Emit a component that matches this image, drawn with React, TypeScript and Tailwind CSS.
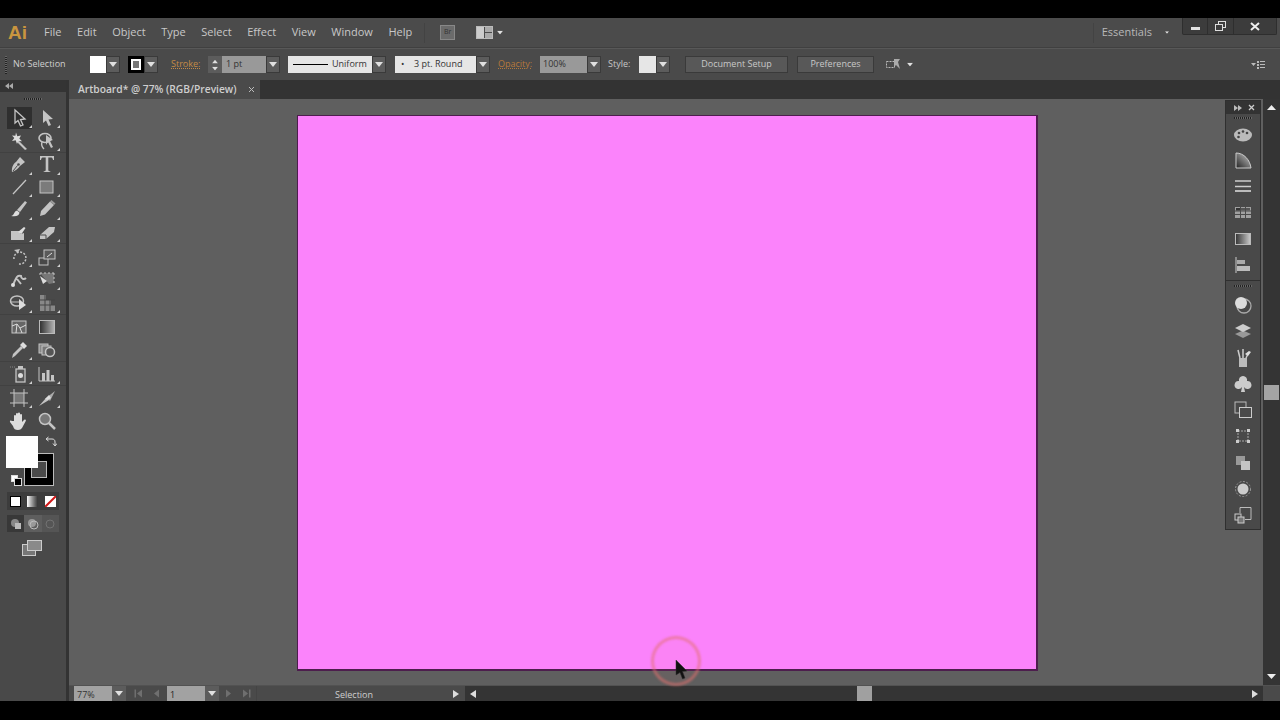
import type { ReactNode } from "react"

const FONT = "font-['Open_Sans','Liberation_Sans',sans-serif]"

// small down triangle used by every dropdown
function Tri({ className = "" }: { className?: string }) {
  return (
    <svg width="8" height="5" viewBox="0 0 8 5" className={className}>
      <path d="M0 0h8L4 5z" fill="#e0e0e0" />
    </svg>
  )
}

function DropBtn() {
  return (
    <div className="w-[14px] h-[17px] bg-[#5c5c5c] border border-[#3a3a3a] flex items-center justify-center">
      <Tri />
    </div>
  )
}

function Icon({ children, w = 20, h = 20 }: { children: ReactNode; w?: number; h?: number }) {
  return (
    <svg width={w} height={h} viewBox={`0 0 ${w} ${h}`} fill="none">
      {children}
    </svg>
  )
}

const c = "#c4c4c4"
const toolRows: ReactNode[][][] = [
  [
    [
      <path d="M6 2l10 9-4.5.5L14 17l-2.500 1-2.500-5.500L6 15z" stroke={c} strokeWidth="1.300" />,
      <path d="M6 2l10 9-4.500.5L14 17l-2.500 1-2.500-5.500L6 15z" fill={c} />,
    ],
    [
      <g><path d="M9 9l9 9-2 1-8-8z" fill={c} /><path d="M7 1.500l1.300 3.700 3.700-.7-1.700 3 2.700 2.700-3.800-.2L8 13l-1.300-3.700L3 10l2.300-3L3 4.500l3.400.3z" fill="#ddd" /></g>,
      <g><ellipse cx="8" cy="7" rx="6" ry="4.500" stroke={c} strokeWidth="1.600" /><path d="M9 4l7 5-3 1 3 6-2 1-3-6-2 3z" fill={c} /><path d="M5 11c-1 3 1 6 2 7" stroke={c} strokeWidth="1.400" /></g>,
    ],
  ],
  [
    [
      <g><path d="M3 18c-.5-4 1-8 4-10l4-5 5 5-5 4c-2 3-5 5-8 6z" fill={c} /><circle cx="9.500" cy="10.500" r="1.300" fill="#4a4a4a" /><path d="M4 17l4.500-5.500" stroke="#4a4a4a" /></g>,
      <path d="M3 2h14v4h-1c-.3-2-1-2.500-2.500-2.500H11.300v12.500c0 1 .7 1.200 2 1.300v.7H6.700v-.7c1.300-.1 2-.3 2-1.300V3.500H6.500C5 3.500 4.300 4 4 6H3z" fill={c} />,
    ],
    [
      <path d="M4 17L17 3" stroke={c} strokeWidth="1.300" />,
      <rect x="3" y="4" width="13" height="12" fill="#7b7b7b" stroke={c} />,
    ],
    [
      <g><path d="M8 11l8-9 2 1.500-7 9.500z" fill={c} /><path d="M2 17c3 0 3-5 6-5.500l2.500 2c0 3-3 4.500-8.500 3.500z" fill="#ddd" /></g>,
      <g><path d="M3 17l1-5 9-9.500 4 3.500-9 9.500z" fill={c} /><path d="M13 2.500l4 3.500 1.500-1.500-4-3.500z" fill="#999" /></g>,
    ],
    [
      <g><path d="M2 9h8l2 3 3-1v7H2z" fill={c} /><path d="M9 10l6-5 1.500 1-4 6z" fill="#ddd" /></g>,
      <g><path d="M3 13l9-8h6l-1 5-8 7H3z" fill={c} /><path d="M3 13h6v4" stroke="#4a4a4a" /></g>,
    ],
  ],
  [
    [
      <g><path d="M5 12a6 6 0 1 1 5 5" stroke={c} strokeWidth="1.500" strokeDasharray="2 1.500" /><path d="M5 3l6-1-2 4z" fill={c} /></g>,
      <g><rect x="2" y="11" width="9" height="7" stroke={c} /><rect x="7" y="3" width="11" height="9" stroke={c} fill="#5a5a5a" /><path d="M10 10l5-4" stroke="#ddd" /></g>,
    ],
    [
      <g><path d="M4 15c3-6 3-10 8-9 0 3 3 4 5 2M8 9l4 5" stroke={c} strokeWidth="2" /><circle cx="4" cy="15" r="2" fill="#ddd" /></g>,
      <g><path d="M3 3h14v10l-5 1z" fill="#777" /><path d="M3 3h14M17 3v12M3 3v3" stroke={c} strokeDasharray="2 2" /><path d="M3 6l7 5-4 3z" fill="#ddd" /></g>,
    ],
    [
      <g><ellipse cx="8" cy="8" rx="6.500" ry="5" stroke={c} strokeWidth="1.500" /><path d="M1.500 9h9" stroke={c} /><path d="M10 6l7 6-7 5z" fill="#ddd" /></g>,
      <g><path d="M3 2h6v5h5v5h4v6H3z" fill="#888" /><path d="M3 7h15M3 12h15M8 2v16M13 7v11" stroke="#444" /></g>,
    ],
  ],
  [
    [
      <g><rect x="3" y="4" width="14" height="12" fill="#666" stroke={c} /><path d="M3 9l5-2 3 4 6-3M8 7l-1 9M11 11l2 5" stroke="#ddd" /></g>,
      <g><defs><linearGradient id="gradTool"><stop offset="0" stopColor="#2e2e2e" /><stop offset="1" stopColor="#b5b5b5" /></linearGradient></defs><rect x="2.500" y="3.500" width="15" height="13" fill="url(#gradTool)" stroke="#bbb" /></g>,
    ],
    [
      <g><path d="M3 18l1-4 8-8 2 2-8 8z" fill={c} /><path d="M11 5l3-3 4 4-3 3z" fill="#ddd" /></g>,
      <g><rect x="2" y="4" width="9" height="9" fill="#888" stroke={c} /><rect x="5" y="6" width="9" height="9" fill="#777" stroke={c} /><circle cx="13" cy="12" r="4.500" fill="#555" stroke={c} strokeWidth="1.500" /></g>,
    ],
  ],
  [
    [
      <g><path d="M1 3h1M3 3h1M5 3h1" stroke="#888" /><rect x="7" y="5" width="9" height="13" stroke={c} strokeWidth="1.300" fill="#555" /><rect x="9" y="2" width="5" height="3" fill={c} /><circle cx="11.500" cy="11.500" r="2.500" fill="#ddd" /></g>,
      <g><path d="M2 3v14h16" stroke={c} /><rect x="5" y="9" width="3" height="8" fill={c} /><rect x="9.500" y="6" width="3" height="11" fill={c} /><rect x="14" y="11" width="3" height="6" fill={c} /></g>,
    ],
  ],
  [
    [
      <g><rect x="5" y="5" width="10" height="10" fill="#777" /><path d="M5 1v4M15 1v4M5 15v4M15 15v4M1 5h4M1 15h4M15 5h4M15 15h4M5 5h10v10H5z" stroke={c} /></g>,
      <g><path d="M2 18L9 10l3 2z" fill={c} /><path d="M9 10l9-7-5 10-1-1z" fill="#aaa" /><path d="M8 11l4-4 2 3-3 2z" fill="#ddd" /></g>,
    ],
    [
      <path d="M5 10V5a1 1 0 0 1 2 0v3-5a1 1 0 0 1 2 0v5-5.500a1 1 0 0 1 2 0V8 4a1 1 0 0 1 2 0v7l2-2c1.500-1 2.500 0 1.500 1.500L13 17c-1 1-2 2-4 2-3 0-4-1-5-4l-3-4c-.5-1.500 1-2 2-1z" fill="#ddd" />,
      <g><circle cx="8" cy="8" r="5.500" fill="#777" stroke={c} strokeWidth="1.500" /><path d="M12 12l6 6" stroke={c} strokeWidth="2.500" /></g>,
    ],
  ],
]

// tools without a flyout triangle; [group, row, col]
const noFlyout = new Set(["0-1-0", "3-0-0", "3-0-1", "3-1-1", "5-1-1", "5-1-0"])

function ToolBar() {
  return (
    <div className="w-[66px] bg-[#494949] flex flex-col shrink-0">
      <div className="h-[12px] bg-[#343434] flex items-center pl-[5px]">
        <svg width="8" height="6" viewBox="0 0 8 6"><path d="M4 0v6L0 3zM8 0v6L4 3z" fill="#aaa" /></svg>
      </div>
      <div className="h-[14px] flex items-center justify-center">
        <div className="w-[18px] h-[2px] bg-[repeating-linear-gradient(90deg,#222_0_1px,#666_1px_2px)]" />
      </div>
      {toolRows.map((group, g) => (
        <div key={g} className={g === 0 ? "" : g === 2 ? "border-t border-[#414141] pt-[1px]" : "border-t border-[#414141]"}>
          {group.map((row, r) => (
            <div key={r} className={`flex pl-[5px] ${g === 1 ? "h-[22.500px]" : "h-[23px]"}`}>
              {row.map((ico, t) => (
                <div key={t} className="relative w-[28px] h-full flex items-center justify-center">
                  {g === 0 && r === 0 && t === 0 && (
                    <div className="absolute left-[2px] right-[1px] top-[1px] bottom-0 bg-[#2f2f2f]" />
                  )}
                  <div className="relative flex">
                    <Icon>{ico}</Icon>
                  </div>
                  {!noFlyout.has(`${g}-${r}-${t}`) && (
                    <div className="absolute right-[1px] bottom-[1px] w-0 h-0 border-l-[3px] border-l-transparent border-b-[3px] border-b-[#d0d0d0]" />
                  )}
                </div>
              ))}
            </div>
          ))}
        </div>
      ))}

      {/* fill and stroke */}
      <div className="relative h-[56px] ml-[6px] mt-[4px] shrink-0">
        <div className="absolute left-[18px] top-[17px] w-[30px] h-[33px] bg-black border border-[#bbb] flex items-center justify-center">
          <div className="w-[16px] h-[17px] border border-[#bbb] bg-[#4a4a4a]" />
        </div>
        <div className="absolute left-0 top-0 w-[32px] h-[32px] bg-white" />
        <svg className="absolute left-[39px] top-[0px]" width="12" height="12" viewBox="0 0 12 12" fill="none">
          <path d="M2 3h5c2 0 3 1 3 3v3M1 3l2.500-2M1 3l2.500 2M10 10L8 7.500M10 10l2-2.500" stroke="#ddd" />
        </svg>
        <div className="absolute left-[5px] top-[39px] w-[7px] h-[7px] border border-[#ddd] bg-white" />
        <div className="absolute left-[8px] top-[42px] w-[8px] h-[8px] border border-[#ddd] bg-black" />
      </div>

      <div className="mx-[7px] h-[18px] bg-[#3c3c3c] flex items-center shrink-0">
        <div className="flex-1 flex justify-center">
          <div className="w-[11px] h-[11px] bg-white border border-black" />
        </div>
        <div className="flex-1 flex justify-center">
          <div className="w-[11px] h-[11px] bg-gradient-to-r from-white to-[#333]" />
        </div>
        <div className="flex-1 flex justify-center">
          <svg width="11" height="11" viewBox="0 0 11 11">
            <rect width="11" height="11" fill="#fff" />
            <path d="M0 11L11 0" stroke="#d01818" strokeWidth="2" />
          </svg>
        </div>
      </div>

      <div className="mx-[7px] mt-[5px] h-[17px] flex shrink-0">
        <div className="flex-1 bg-[#383838] flex items-center justify-center">
          <svg width="12" height="12" viewBox="0 0 12 12">
            <circle cx="5" cy="5" r="4" fill="#888" />
            <rect x="5" y="5" width="6" height="6" fill="#bbb" />
          </svg>
        </div>
        <div className="flex-1 bg-[#5e5e5e] flex items-center justify-center">
          <svg width="12" height="12" viewBox="0 0 12 12" fill="none">
            <circle cx="5" cy="5" r="4" fill="#999" />
            <circle cx="7" cy="7" r="4" stroke="#bbb" />
          </svg>
        </div>
        <div className="flex-1 bg-[#555] flex items-center justify-center">
          <svg width="12" height="12" viewBox="0 0 12 12" fill="none">
            <circle cx="6" cy="6" r="4" stroke="#727272" />
          </svg>
        </div>
      </div>

      <div className="mt-[8px] ml-[22px] shrink-0">
        <svg width="20" height="16" viewBox="0 0 20 16">
          <rect x="0.500" y="4.500" width="13" height="11" fill="#777" stroke="#ccc" />
          <rect x="5.500" y="0.500" width="14" height="10" fill="#8a8a8a" stroke="#ccc" />
        </svg>
      </div>
    </div>
  )
}

const dockTop: ReactNode[] = [
  <g><ellipse cx="10" cy="10" rx="9" ry="6.500" fill="#bbb" /><circle cx="6" cy="8" r="1.300" fill="#444" /><circle cx="10" cy="6.500" r="1.300" fill="#444" /><circle cx="14" cy="8" r="1.300" fill="#444" /><circle cx="5.500" cy="12" r="1.300" fill="#444" /></g>,
  <g><defs><linearGradient id="g1" x1="0" y1="1" x2="1" y2="0"><stop offset="0" stopColor="#222" /><stop offset="1" stopColor="#ccc" /></linearGradient></defs><path d="M3 2c8 0 14 7 15 15H3z" fill="url(#g1)" stroke="#ccc" /></g>,
  <g><path d="M2 4h16M2 9.500h16" stroke="#ccc" strokeWidth="1.300" /><rect x="2" y="13" width="16" height="2" fill="#bbb" /></g>,
  <g><rect x="2" y="4" width="16" height="11" fill="#a0a0a0" /><path d="M7.500 4v11M12.500 4v11M2 8h16M2 11.500h16" stroke="#4a4a4a" /><rect x="3" y="5" width="4" height="2.500" fill="#333" /><rect x="8" y="5" width="4" height="2.500" fill="#555" /><rect x="13" y="5" width="4" height="2.500" fill="#555" /></g>,
  <rect x="2.500" y="4.500" width="15" height="11" fill="url(#g2)" stroke="#bbb" />,
  <g><path d="M3 2v16" stroke="#ccc" /><rect x="4" y="5" width="8" height="4" fill="#aaa" /><rect x="4" y="11" width="13" height="5" fill="#bbb" /></g>,
]

const dockBottom: ReactNode[] = [
  <g><circle cx="11" cy="11" r="7" stroke="#aaa" strokeWidth="1.300" /><circle cx="8" cy="8" r="6" fill="#ddd" /></g>,
  <g><path d="M10 9.500l8 3.500-8 4-8-4z" fill="#999" /><path d="M10 3l8 4-8 4-8-4z" fill="#ccc" /></g>,
  <g><rect x="6" y="10" width="8" height="9" fill="#bbb" /><path d="M7 10L5 2M10 10V1M13 10l3-6" stroke="#ccc" strokeWidth="1.500" /><path d="M12 6l4-3 2 1-3 4z" fill="#ddd" /></g>,
  <path d="M10 2a4 4 0 0 1 4 5 4 4 0 1 1-3 6l1 5H8l1-5a4 4 0 1 1-3-6 4 4 0 0 1 4-5z" fill="#ccc" />,
  <g><rect x="2" y="2" width="11" height="11" stroke="#bbb" /><rect x="6.500" y="7.500" width="12" height="10" fill="#4a4a4a" stroke="#ccc" /></g>,
  <g><rect x="5" y="5" width="10" height="10" stroke="#aaa" strokeDasharray="2 1" /><rect x="3" y="3" width="3" height="3" fill="#ccc" /><rect x="14" y="3" width="3" height="3" fill="#ccc" /><rect x="3" y="14" width="3" height="3" fill="#ccc" /><rect x="14" y="14" width="3" height="3" fill="#ccc" /></g>,
  <g><rect x="3" y="3" width="9" height="9" fill="#999" /><rect x="8" y="8" width="9" height="9" fill="#c4c4c4" /></g>,
  <g><circle cx="10" cy="10" r="7.500" stroke="#999" strokeDasharray="2 1.500" /><circle cx="10" cy="10" r="5.500" fill="#ccc" /></g>,
  <g><path d="M7 8V2.500h11v12h-6" stroke="#bbb" /><rect x="2" y="9" width="6" height="6" fill="#4a4a4a" stroke="#ccc" /><rect x="5" y="12" width="6" height="6" fill="#777" stroke="#ccc" /></g>,
]

function PanelDock() {
  return (
    <div className="absolute top-[1px] right-[2px] w-[36px] h-[430px] bg-[#494949] border border-[#2f2f2f] flex flex-col items-center">
      <svg width="0" height="0" className="absolute">
        <defs>
          <linearGradient id="g2"><stop offset="0" stopColor="#333" /><stop offset="1" stopColor="#ccc" /></linearGradient>
        </defs>
      </svg>
      <div className="w-full h-[13px] bg-[#333] flex items-center justify-between pl-[8px] pr-[5px] shrink-0">
        <svg width="8" height="6" viewBox="0 0 8 6"><path d="M0 0v6l4-3zM4 0v6l4-3z" fill="#bbb" /></svg>
        <svg width="7" height="7" viewBox="0 0 7 7"><path d="M1 1l5 5M6 1L1 6" stroke="#ccc" strokeWidth="1.300" /></svg>
      </div>
      <div className="mt-[3px] w-[18px] h-[2px] bg-[repeating-linear-gradient(90deg,#222_0_1px,#666_1px_2px)] shrink-0" />
      <div className="flex flex-col mt-[3px]">
        {dockTop.map((ico, i) => (
          <div key={i} className="h-[26px] flex items-center justify-center">
            <Icon>{ico}</Icon>
          </div>
        ))}
      </div>
      <div className="mt-[2px] w-full border-t border-[#2f2f2f] shrink-0" />
      <div className="mt-[4px] w-[18px] h-[2px] bg-[repeating-linear-gradient(90deg,#222_0_1px,#666_1px_2px)] shrink-0" />
      <div className="flex flex-col mt-[5px]">
        {dockBottom.map((ico, i) => (
          <div key={i} className="h-[26.250px] flex items-center justify-center">
            <Icon>{ico}</Icon>
          </div>
        ))}
      </div>
    </div>
  )
}

function MenuBar() {
  const items = ["File", "Edit", "Object", "Type", "Select", "Effect", "View", "Window", "Help"]
  return (
    <div className="h-[30px] bg-[#4b4b4b] border-b border-[#404040] flex items-center relative">
      <span className="ml-[8px] w-[36px] text-[#c9953f] text-[19px] font-bold font-['Liberation_Sans',sans-serif] leading-none">Ai</span>
      <div className="flex gap-[15.600px] text-[11px] text-[#c8c8c8]">
        {items.map((m) => (
          <span key={m}>{m}</span>
        ))}
      </div>
      <div className="ml-[12px] w-px h-[20px] bg-[#434343]" />
      <div className="ml-[15px] w-[15px] h-[15px] bg-[#6b6b6b] border border-[#888] flex items-center justify-center text-[7px] text-[#333]">Br</div>
      <div className="ml-[21px] w-[17px] h-[13px] border border-[#bbb] flex gap-px">
        <div className="w-[7px] bg-[#ccc]" />
        <div className="flex-1 flex flex-col gap-px">
          <div className="flex-1 bg-[#aaa]" />
          <div className="flex-1 bg-[#aaa]" />
        </div>
      </div>
      <Tri className="ml-[3px] scale-75" />
      <div className="flex-1" />
      <div className="w-px h-[20px] bg-[#434343]" />
      <span className="ml-[8px] text-[11px] text-[#b8b8b8]">Essentials</span>
      <Tri className="ml-[11px] scale-50" />
      {/* window buttons */}
      <div className="ml-[11px] mr-[3px] self-start h-[17px] w-[95px] bg-[#3c3c3c] border border-t-0 border-[#2e2e2e] rounded-b-[2px] flex">
        <div className="w-[25px] flex items-center justify-center border-r border-[#2e2e2e]">
          <div className="mt-[5px] w-[9px] h-[2.500px] bg-[#e2e2e2]" />
        </div>
        <div className="w-[26px] flex items-center justify-center border-r border-[#2e2e2e]">
          <svg width="11" height="10" viewBox="0 0 11 10" fill="none">
            <rect x="3.500" y="0.500" width="7" height="6" stroke="#ddd" />
            <rect x="0.500" y="3.500" width="7" height="6" fill="#3c3c3c" stroke="#ddd" />
          </svg>
        </div>
        <div className="flex-1 flex items-center justify-center">
          <svg width="10" height="9" viewBox="0 0 10 9"><path d="M1 1l8 7M9 1L1 8" stroke="#eee" strokeWidth="2" /></svg>
        </div>
      </div>
    </div>
  )
}

function ControlBar() {
  return (
    <div className="h-[32px] bg-[#4a4a4a] border-t border-[#585858] flex items-center text-[9px] text-[#d0d0d0] relative">
      <div className="ml-[5px] w-[2px] h-[18px] bg-[repeating-linear-gradient(0deg,#222_0_1px,#666_1px_2px)]" />
      <span className="ml-[6px] w-[77px] pb-[2px]">No Selection</span>
      <div className="w-[16px] h-[17px] bg-white" />
      <DropBtn />
      <div className="ml-[8px] w-[16px] h-[17px] bg-black flex items-center justify-center">
        <div className="w-[10px] h-[11px] border-2 border-white bg-[#777]" />
      </div>
      <DropBtn />
      <span className="ml-[13px] w-[37px] pb-[2px] text-[#c58a45] underline decoration-dotted">Stroke:</span>
      <div className="w-[14px] h-[17px] bg-[#5c5c5c] flex flex-col items-center justify-center gap-[2px]">
        <Tri className="rotate-180 scale-75" />
        <Tri className="scale-75" />
      </div>
      <div className="w-[44px] h-[17px] bg-[#999] text-[#333] flex items-center pl-[4px] pb-[2px]">1 pt</div>
      <DropBtn />
      <div className="ml-[8px] w-[84px] h-[17px] bg-[#e6e6e6] text-[#333] flex items-center pl-[5px]">
        <div className="w-[35px] h-[1.500px] bg-black" />
        <span className="ml-[4px] pb-[2px]">Uniform</span>
      </div>
      <DropBtn />
      <div className="ml-[9px] w-[81px] h-[17px] bg-[#e6e6e6] text-[#333] flex items-center pl-[6px] pb-[2px]">
        <span className="w-[13px]">•</span>
        <span>3 pt. Round</span>
      </div>
      <DropBtn />
      <span className="ml-[8px] w-[42px] pb-[2px] text-[#b5783a] underline decoration-dotted">Opacity:</span>
      <div className="w-[47px] h-[17px] bg-[#999] text-[#333] flex items-center pl-[3px] pb-[2px]">100%</div>
      <DropBtn />
      <span className="ml-[7px] w-[31px] pb-[2px] text-[#c8c8c8]">Style:</span>
      <div className="w-[17px] h-[17px] bg-[#e6e6e6]" />
      <DropBtn />
      <div className="ml-[15px] w-[103px] h-[17px] bg-[#585858] border border-[#3a3a3a] flex items-center justify-center pb-[2px] text-[#c8c8c8]">Document Setup</div>
      <div className="ml-[9px] w-[77px] h-[17px] bg-[#585858] border border-[#3a3a3a] flex items-center justify-center pb-[2px] text-[#c8c8c8]">Preferences</div>
      <svg className="ml-[12px]" width="15" height="13" viewBox="0 0 15 13" fill="none">
        <rect x="0.500" y="3.500" width="8" height="6" stroke="#bbb" strokeDasharray="2 1" />
        <path d="M8 1h6l-2 3 2 7-4-4-2 2z" fill="#aaa" />
      </svg>
      <Tri className="ml-[5px] scale-75" />
      <div className="flex-1" />
      <svg className="mr-[15px]" width="14" height="10" viewBox="0 0 14 10">
        <path d="M0 3h5L2.500 6zM6 1h2v2H6zM6 4h2v2H6zM6 7h2v2H6zM9 1h5v1H9zM9 4h5v1H9zM9 7h5v1H9z" fill="#bbb" />
      </svg>
    </div>
  )
}

function Tab() {
  return (
    <div className="h-[19px] bg-[#333] flex shrink-0">
      <div className="w-[191px] bg-[#4a4a4a] flex items-center pl-[9px] text-[10.250px] font-semibold text-[#cfcfcf]">
        <span className="w-[170px]">Artboard* @ 77% (RGB/Preview)</span>
        <svg width="7" height="7" viewBox="0 0 7 7"><path d="M1 1l5 5M6 1L1 6" stroke="#bbb" /></svg>
      </div>
    </div>
  )
}

function NavArrow({ flip, bar }: { flip?: boolean; bar?: boolean }) {
  return (
    <svg width="9" height="9" viewBox="0 0 9 9" className={flip ? "rotate-180" : ""}>
      <path d="M1 0.500l5 4-5 4z" fill="#6f6f6f" />
      {bar && <rect x="7" y="0.500" width="1.500" height="8" fill="#6f6f6f" />}
    </svg>
  )
}

function StatusBar() {
  return (
    <div className="h-[15px] bg-[#4a4a4a] flex items-center text-[9px] shrink-0">
      <div className="ml-[5px] w-[38px] h-[15px] bg-[#a2a2a2] text-[#333] flex items-center pl-[3px] pt-[2px]">77%</div>
      <div className="w-[14px] h-[15px] bg-[#5c5c5c] flex items-center justify-center"><Tri /></div>
      <div className="ml-[8px] flex gap-[8px] items-center">
        <NavArrow flip bar />
        <NavArrow flip />
      </div>
      <div className="ml-[7px] w-[38px] h-[15px] bg-[#a2a2a2] text-[#222] flex items-center pl-[3px] pt-[2px]">1</div>
      <div className="w-[14px] h-[15px] bg-[#5c5c5c] flex items-center justify-center"><Tri /></div>
      <div className="ml-[6px] flex gap-[8px] items-center">
        <NavArrow />
        <NavArrow bar />
      </div>
      <div className="ml-[5px] w-[203px] flex items-center border-l border-[#444]">
        <span className="ml-[78px] w-[118px] text-[#cfcfcf] pt-[2px]">Selection</span>
        <svg width="6" height="8" viewBox="0 0 6 8"><path d="M0 0l6 4-6 4z" fill="#ddd" /></svg>
      </div>
      {/* horizontal scrollbar */}
      <div className="ml-[6px] flex-1 h-[15px] bg-[#343434] flex items-center">
        <svg className="ml-[5px]" width="6" height="8" viewBox="0 0 6 8"><path d="M6 0L0 4l6 4z" fill="#ddd" /></svg>
        <div className="ml-[381px] w-[15px] h-[15px] bg-[#a0a0a0]" />
        <div className="flex-1" />
        <svg className="mr-[5px]" width="6" height="8" viewBox="0 0 6 8"><path d="M0 0l6 4-6 4z" fill="#ddd" /></svg>
      </div>
      <div className="w-[17px] h-[15px] bg-[#4a4a4a]" />
    </div>
  )
}

function VScroll() {
  return (
    <div className="w-[17px] bg-[#343434] flex flex-col items-center shrink-0">
      <svg className="mt-[6px]" width="9" height="5" viewBox="0 0 9 5"><path d="M0 5l4.500-5L9 5z" fill="#eee" /></svg>
      <div className="mt-[275px] w-[15px] h-[15px] bg-[#a4a4a4]" />
      <div className="flex-1" />
      <svg className="mb-[6px]" width="9" height="5" viewBox="0 0 9 5"><path d="M0 0l4.500 5L9 0z" fill="#eee" /></svg>
    </div>
  )
}

export default function App() {
  return (
    <div className={`w-[1280px] h-[720px] bg-black overflow-hidden flex flex-col pt-[18px] pb-[19px] ${FONT}`}>
      <MenuBar />
      <ControlBar />
      <div className="flex-1 flex min-h-0 relative">
        <ToolBar />
        <div className="w-[3px] bg-[#333] shrink-0" />
        <div className="flex-1 flex flex-col min-w-0">
          <Tab />
          <div className="flex-1 flex min-h-0">
            <div className="flex-1 bg-[#5f5f5f] relative pl-[228px] pt-[16px]">
              <div className="w-[741px] h-[556px] bg-[#fb83fb] border border-r-2 border-b-2 border-[#4d1e4d]" />
              <PanelDock />
            </div>
            <VScroll />
          </div>
          <div className="h-px bg-[#525252] shrink-0" />
          <StatusBar />
        </div>
        {/* recording cursor highlight */}
        <div className="absolute left-[651px] top-[556px] w-[50px] h-[50px] rounded-full border-[3px] border-[#e2706e]/55 bg-[#ff8080]/5 blur-[1px]" />
        <svg className="absolute left-[675px] top-[580px]" width="13" height="20" viewBox="0 0 13 20">
          <path d="M1 0l11 11-4.500.5L10 18l-2.500 1-2.500-6.500L1 15z" fill="#111" stroke="#333" strokeWidth=".5" />
        </svg>
      </div>
    </div>
  )
}
